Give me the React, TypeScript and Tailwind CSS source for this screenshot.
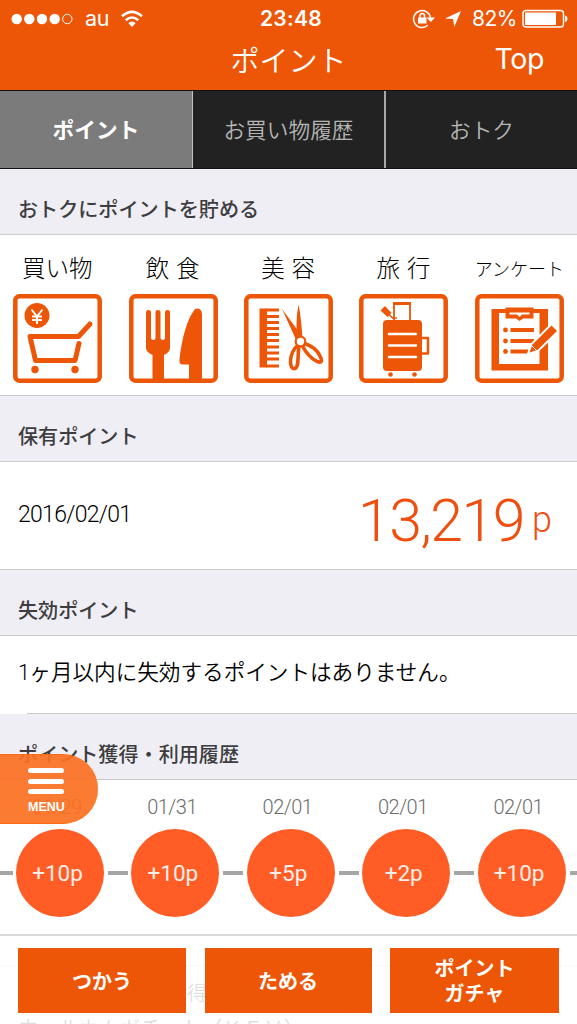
import type { ReactNode } from "react";

const categories = [
  { label: "買い物", labelClass: "text-[23.5px] pr-px", icon: <CartIcon /> },
  { label: "飲 食", labelClass: "text-[23.5px] tracking-[0.8px]", icon: <MealIcon /> },
  { label: "美 容", labelClass: "text-[23.5px] tracking-[0.8px]", icon: <BeautyIcon /> },
  { label: "旅 行", labelClass: "text-[23.5px] tracking-[0.8px]", icon: <TravelIcon /> },
  { label: "アンケート", labelClass: "text-[18px] relative top-px", icon: <SurveyIcon /> },
];

const history = [
  { date: "01/29", point: "+10p" },
  { date: "01/31", point: "+10p" },
  { date: "02/01", point: "+5p" },
  { date: "02/01", point: "+2p" },
  { date: "02/01", point: "+10p" },
];

function CartIcon() {
  return (
    <>
      <circle cx="24" cy="21.5" r="12.5" fill="#ec5606" />
      <path d="M18.5 15.5L24 22.5L29.5 15.5M24 22V30M19 22.5H29M19 26H29" stroke="#fff" strokeWidth="2" fill="none" />
      <path d="M77 30L65.5 42.5H17L22.5 66.5H62L66 49.5" stroke="#ec5606" strokeWidth="5" fill="none" strokeLinecap="round" strokeLinejoin="round" />
      <circle cx="22" cy="75.5" r="3.7" fill="#ec5606" />
      <circle cx="62" cy="75.5" r="3.7" fill="#ec5606" />
    </>
  );
}

function MealIcon() {
  return (
    <g fill="#ec5606">
      <path d="M17 18Q17 16 19.5 16Q22 16 22 18V44Q22 46 24.5 46Q26.5 46 26.5 44V18Q26.5 16 29 16Q31.5 16 31.5 18V44Q31.5 46 34 46Q36 46 36 44V18Q36 16 38.5 16Q41 16 41 18V54Q41 58 35 61V86H23.5V61Q17 58 17 54Z" />
      <path d="M66 15Q72 13 73 20V86H60V70.5H53Q50 70 50.5 65C53 44 58 25 66 15Z" />
    </g>
  );
}

function BeautyIcon() {
  return (
    <>
      <path d="M15.5 14.5H23V73.5H15.5Z" fill="#ec5606" />
      <path
        d="M22 16H35M22 22.5H35M22 28.5H35M22 34.5H35M22 40.5H35M22 46.5H35M22 53H35M22 59H35M22 65H35M22 72H35"
        stroke="#ec5606"
        strokeWidth="2.8"
      />
      <path d="M38 15L59 43.5L54 50Z" fill="#ec5606" />
      <path d="M54.5 10.5Q57.5 25 58.5 46L53 46Q51.5 25 54.5 10.5Z" fill="#ec5606" />
      <path d="M54 51Q47 57 46.5 67Q46.5 75.5 51 74.5C55.5 73 53 60 55.5 50M59 49Q72 53 76 62Q80 70 73 67.5C66 64 62 59 58 51" stroke="#ec5606" strokeWidth="3.6" fill="none" />
      <circle cx="56.5" cy="47.5" r="4.8" fill="#fff" stroke="#ec5606" strokeWidth="2.2" />
    </>
  );
}

function TravelIcon() {
  return (
    <>
      <rect x="35" y="9.5" width="16" height="19" fill="none" stroke="#ec5606" strokeWidth="1.8" />
      <path d="M34.1 9.5H51.9" stroke="#ec5606" strokeWidth="3" />
      <path d="M21.5 16.5L26 12L32.5 19L28.5 23Z" fill="#ec5606" />
      <path d="M30 20.5L33.5 24H38" stroke="#ec5606" strokeWidth="1.6" fill="none" />
      <rect x="24" y="26" width="39" height="51" rx="4" fill="#ec5606" />
      <path d="M30 40H57M30 51.5H57M30 63H57" stroke="#fff" strokeWidth="2.5" strokeLinecap="round" />
      <path d="M62 44H69V59.5H62" stroke="#ec5606" strokeWidth="2.5" fill="none" strokeLinejoin="round" />
      <circle cx="31.5" cy="80.5" r="2.3" fill="#ec5606" />
      <circle cx="55.5" cy="80.5" r="2.3" fill="#ec5606" />
    </>
  );
}

function SurveyIcon() {
  return (
    <>
      <path d="M16.5 15H73V76.5H16.5Z" fill="#ec5606" />
      <path d="M24 19H64.5V70H24Z" fill="#fff" />
      <path d="M30.5 13.5H58.5V24.5H48L44.5 27L41 24.5H30.5Z" fill="#ec5606" />
      <path d="M34.5 18.5H54.5V20.5H47L44.5 23L42 20.5H34.5Z" fill="#fff" />
      <path d="M35.5 36H59M35.5 47H59M35.5 57.5H53" stroke="#ec5606" strokeWidth="4" />
      <circle cx="30.5" cy="36" r="2.4" fill="#ec5606" />
      <circle cx="30.5" cy="47" r="2.4" fill="#ec5606" />
      <circle cx="30.5" cy="57.5" r="2.4" fill="#ec5606" />
      <path d="M54.5 58.5L57.5 50.5L76.5 31.5L82 37L62.5 56Z" fill="#ec5606" stroke="#fff" strokeWidth="4" paintOrder="stroke" />
      <path d="M56.5 51.5L62 57" stroke="#fff" strokeWidth="1" />
    </>
  );
}

function StatusBar() {
  return (
    <div className="h-9 grid grid-cols-3 items-center pt-px text-white font-[Inter,sans-serif] text-[21.5px]">
      <div className="flex items-center pl-[11px]">
        <svg width="62" height="12" viewBox="0 0 62 12" fill="#fff">
          <circle cx="5.7" cy="6" r="5.2" />
          <circle cx="18.3" cy="6" r="5.2" />
          <circle cx="31" cy="6" r="5.2" />
          <circle cx="43.7" cy="6" r="5.2" />
          <circle cx="56.3" cy="6" r="4.7" fill="none" stroke="#fff" />
        </svg>
        <span className="ml-[12px] tracking-[-0.2px]">au</span>
        <svg className="ml-[12px]" width="22" height="18" viewBox="0 0 22 18" fill="none" stroke="#fff" strokeWidth="2.6">
          <path d="M1 6.3Q11 -2.7 21 6.3M4.7 10.3Q11 4.7 17.3 10.3" />
          <path d="M7.3 13Q11 9.8 14.7 13L11 17Z" fill="#fff" stroke="none" />
        </svg>
      </div>
      <span className="pl-[5px] text-center font-semibold text-[21px] tracking-[0.3px]">23:48</span>
      <div className="flex items-center justify-end pr-[9px]">
        <svg width="24" height="20" viewBox="0 0 24 20" fill="none" stroke="#fff" strokeWidth="1.5">
          <path d="M15.8 16.3A8.5 8.5 0 1 1 18.5 9" />
          <path d="M14.5 8.5H23L18.8 13Z" fill="#fff" stroke="none" />
          <rect x="6" y="8.5" width="8.5" height="6" fill="#fff" stroke="none" />
          <path d="M8 9V6.8Q8 4.5 10.2 4.5Q12.5 4.5 12.5 6.8V9" />
        </svg>
        <svg className="ml-[8px]" width="18" height="18" viewBox="0 0 18 18" fill="#fff">
          <path d="M17 1L10.3 17L9 9L1 8.5Z" />
        </svg>
        <span className="ml-[10px] text-[21px] tracking-[-0.5px]">82%</span>
        <svg className="ml-[5px]" width="46" height="20" viewBox="0 0 46 20">
          <rect x="1" y="1.5" width="40.5" height="16.5" rx="3" fill="none" stroke="#fff" strokeWidth="1.4" />
          <path d="M3 3.5H34V16H3Z" fill="#fff" />
          <path d="M43 6.5Q45.5 7 45.5 9.8Q45.5 12.5 43 13Z" fill="#fff" />
        </svg>
      </div>
    </div>
  );
}

function SectionTitle({ children }: { children: ReactNode }) {
  return (
    <h2 className="h-[66px] pt-[25px] pl-[18px] bg-[#efeef4] border-b border-[#cbcacf] text-[20.1px] leading-[30px] font-medium text-[#3d3d40] whitespace-nowrap">
      {children}
    </h2>
  );
}

export default function App() {
  return (
    <div className="relative h-[1024px] w-full overflow-hidden bg-white text-black font-['Noto_Sans_CJK_JP',sans-serif]">
      <header className="h-[90px] bg-[#ec5606] text-white">
        <StatusBar />
        <div className="h-[46px] grid grid-cols-[1fr_auto_1fr] items-center">
          <h1 className="col-start-2 text-[29px] leading-[46px] font-[350]">ポイント</h1>
          <a className="justify-self-end pr-[33px] pt-px text-[28.5px] tracking-[-0.4px] font-[Inter,sans-serif]">Top</a>
        </div>
      </header>

      <nav className="h-[79px] grid grid-cols-[193px_193px_1fr] border-y border-[#111] bg-[#222] text-[21.7px] text-[#b5b5b5] font-[350] text-center leading-[76px]">
        <a className="bg-[#7b7b7b] border-r border-[#c4c4c4] font-bold text-white">ポイント</a>
        <a className="border-r-2 border-[#a8a8a8]">お買い物履歴</a>
        <a>おトク</a>
      </nav>

      <SectionTitle>おトクにポイントを貯める</SectionTitle>
      <ul className="h-[161px] grid grid-cols-5 border-b border-[#cbcacf]">
        {categories.map((c) => (
          <li key={c.label} className="flex flex-col items-center">
            <span className={`h-[59px] pt-[13px] leading-[38px] font-light whitespace-nowrap ${c.labelClass}`}>{c.label}</span>
            <svg width="89" height="89" viewBox="0 0 89 89">
              <rect x="2.3" y="2.3" width="84.4" height="84.4" rx="4" fill="#fff" stroke="#ec5606" strokeWidth="4.5" />
              {c.icon}
            </svg>
          </li>
        ))}
      </ul>

      <SectionTitle>保有ポイント</SectionTitle>
      <div className="h-[108px] flex items-center justify-between pl-[18px] pr-[25px] border-b border-[#cbcacf] font-['Roboto',sans-serif] font-light">
        <span className="text-[23px] tracking-[-0.7px]">2016/02/01</span>
        <span className="flex items-baseline pt-[9px] text-[#f04e0e] text-[59px] tracking-[-1.5px] leading-none">
          13,219<span className="ml-[8px] -translate-y-[9px] text-[36px] leading-none tracking-normal">p</span>
        </span>
      </div>

      <SectionTitle>失効ポイント</SectionTitle>
      <div className="h-[78px]">
        <p className="h-[77px] pl-[18px] text-[21.6px] leading-[70px] font-[350] whitespace-nowrap">
          <span className="font-['Roboto',sans-serif] tracking-[-0.7px]">1</span>ヶ月以内に失効するポイントはありません。
        </p>
        <div className="ml-[27px] border-b border-[#cbcacf]" />
      </div>

      <SectionTitle>ポイント獲得・利用履歴</SectionTitle>
      <div className="h-[156px] border-b-2 border-[#d9d9d9]">
        <ul className="grid grid-cols-5">
          {history.map((h, i) => (
            <li key={i} className="font-['Roboto',sans-serif] font-light">
              <p className="h-[49px] pt-[12px] pr-[2px] text-center text-[20px] leading-[30px] tracking-[-0.5px] text-[#6c6c6c]">{h.date}</p>
              <div className="flex items-center">
                <span className="w-[12.5px] h-1 bg-[#a6a6a6]" />
                <span className="ml-[3.5px] size-[88px] shrink-0 rounded-full bg-[#ff5c26] pr-[5px] text-center text-[22.5px] leading-[89px] font-normal text-white/90">
                  {h.point}
                </span>
                <span className="ml-[4px] flex-1 h-1 bg-[#a6a6a6]" />
              </div>
            </li>
          ))}
        </ul>
      </div>

      {/* next list, showing through the fixed footer */}
      <div className="h-[89px] pt-[29px] text-[20.5px] font-[350]">
        <div className="border-t border-[#ccc]" />
        <p className="pl-[187px] pt-[9px] leading-[34px]">得</p>
        <p className="pl-[18px] leading-[36px] whitespace-nowrap">ウェルカムガチャト（ＫＥＶ）</p>
      </div>

      <button className="absolute left-0 top-[754px] w-[98px] h-[70px] rounded-r-full bg-[#fb7022]/92 border-y border-[#ff6c10] flex flex-col items-start pl-[28px] pt-[13px] text-white">
        <span className="flex flex-col gap-[5.5px]">
          <span className="w-9 h-[5px] rounded-full bg-white" />
          <span className="w-9 h-[5px] rounded-full bg-white" />
          <span className="w-9 h-[5px] rounded-full bg-white" />
        </span>
        <span className="mt-[4px] text-[12.5px] leading-[18px] font-bold font-['Liberation_Sans',sans-serif]">MENU</span>
      </button>

      <footer className="absolute inset-x-0 bottom-0 h-[88px] bg-white/87 px-[18px] pt-[12px] grid grid-cols-[168px_167px_169px] justify-between content-start text-[20px] font-bold text-white">
        <button className="h-[65px] bg-[#ec5606]">つかう</button>
        <button className="h-[65px] bg-[#ec5606]">ためる</button>
        <button className="h-[65px] bg-[#ec5606] leading-[25px] pb-[2px]">
          ポイント
          <br />
          ガチャ
        </button>
      </footer>
    </div>
  );
}
